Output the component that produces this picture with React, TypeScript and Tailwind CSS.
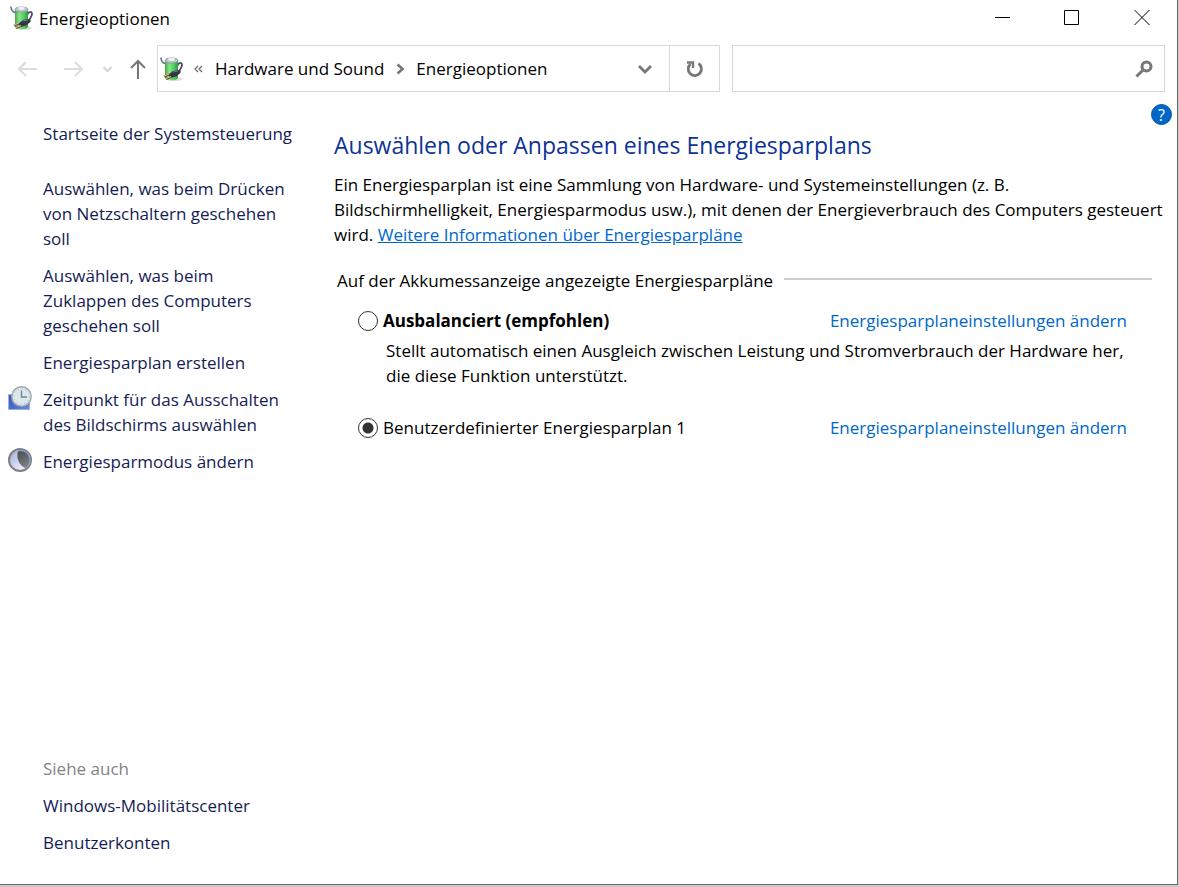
import React, { useState } from 'react';

interface Plan {
  id: string;
  name: string;
  description?: string;
  recommended?: boolean;
}

interface Task {
  label: string;
  icon?: React.ReactNode;
}

const BatteryIcon: React.FC = () => (
  <svg width="24" height="26" viewBox="0 0 24 26" fill="none" aria-hidden="true" className="shrink-0">
    <defs>
      <linearGradient id="battery" x1="4" x2="19" y1="0" y2="0" gradientUnits="userSpaceOnUse">
        <stop stopColor="#2f9a3b" />
        <stop offset=".35" stopColor="#8ce58b" />
        <stop offset=".65" stopColor="#4fd060" />
        <stop offset="1" stopColor="#2c8a3a" />
      </linearGradient>
    </defs>
    <ellipse cx="14" cy="23" rx="8" ry="2" fill="#bbb" opacity=".5" />
    <path d="M1 2c0 4 2 5 5 6" stroke="#6d7384" strokeWidth="1.600" strokeLinecap="round" />
    <path d="M17 10c2-4 5-4 5-1s-3 4-3 8" stroke="#4b5064" strokeWidth="1.800" strokeLinecap="round" />
    <path d="M5 4v18c2 3 11 3 13 0V4z" fill="url(#battery)" />
    <ellipse cx="11.5" cy="4.5" rx="6.5" ry="2.7" fill="#b9c3c4" stroke="#7c8a8b" strokeWidth=".6" />
    <ellipse cx="11.5" cy="3.2" rx="3.4" ry="1.8" fill="#e9f1f3" />
    <path d="m8 19 5-4 6-1 2 2-4 4-6 2z" fill="#343545" />
    <path d="m13 16 5-1" stroke="#777b88" />
    <path d="m4 20.500 5-2m-3 4.500 5-2" stroke="#725035" strokeWidth="2" />
    <path d="m4 20 5-2m-3 4.500 5-2" stroke="#e8c699" />
  </svg>
);

const ClockIcon: React.FC = () => (
  <svg width="24" height="25" viewBox="0 0 24 25" fill="none" aria-hidden="true">
    <defs>
      <linearGradient id="screen" x1="0" x2="20" y1="8" y2="24" gradientUnits="userSpaceOnUse">
        <stop stopColor="#3156bd" />
        <stop offset="1" stopColor="#6387e2" />
      </linearGradient>
    </defs>
    <path d="M.5 8.500h21v15H.5z" fill="url(#screen)" stroke="#a3afd2" />
    <circle cx="13.500" cy="10.500" r="9.700" fill="#dce8ec" stroke="#a3abae" strokeWidth="1.500" />
    <circle cx="13.500" cy="10.500" r="7.500" stroke="#9db3ba" strokeDasharray="1 2.930" />
    <path d="M13.500 4.500v6.500H19" stroke="#6f8994" strokeWidth="1.400" />
  </svg>
);

const MoonIcon: React.FC = () => (
  <svg width="24" height="25" viewBox="0 0 24 25" fill="none" aria-hidden="true">
    <defs>
      <linearGradient id="moon" x1="3" x2="17" y1="4" y2="20" gradientUnits="userSpaceOnUse">
        <stop stopColor="#a9b2da" />
        <stop offset="1" stopColor="#eef0ff" />
      </linearGradient>
      <linearGradient id="shade" x1="10" x2="21" y1="4" y2="20" gradientUnits="userSpaceOnUse">
        <stop stopColor="#4d4d4f" />
        <stop offset="1" stopColor="#898989" />
      </linearGradient>
    </defs>
    <circle cx="12" cy="12" r="11" fill="url(#moon)" stroke="#808080" strokeWidth="2" />
    <path d="M10 3c7-2 12 3 12 9 0 4-2 7-5 8C11 17 8 10 10 3z" fill="url(#shade)" />
    <path d="M10 3c8-2 12 4 12 9 0 4-2 7-5 8" stroke="#7fa3d6" strokeWidth="1.200" />
  </svg>
);

const tasks: Task[] = [
  { label: 'Auswählen, was beim Drücken von Netzschaltern geschehen soll' },
  { label: 'Auswählen, was beim Zuklappen des Computers geschehen soll' },
  { label: 'Energiesparplan erstellen' },
  { label: 'Zeitpunkt für das Ausschalten des Bildschirms auswählen', icon: <ClockIcon /> },
  { label: 'Energiesparmodus ändern', icon: <MoonIcon /> },
];

const plans: Plan[] = [
  {
    id: 'balanced',
    name: 'Ausbalanciert (empfohlen)',
    description:
      'Stellt automatisch einen Ausgleich zwischen Leistung und Stromverbrauch der Hardware her, die diese Funktion unterstützt.',
    recommended: true,
  },
  { id: 'custom', name: 'Benutzerdefinierter Energiesparplan 1' },
];

const TitleBar: React.FC = () => (
  <header className="flex h-9 items-center pl-[10px]">
    <BatteryIcon />
    <h1 className="ml-[5px] grow">Energieoptionen</h1>
    <button aria-label="Minimieren" className="flex h-9 w-[70px] items-center justify-center">
      <svg width="15" height="15" stroke="black" aria-hidden="true"><path d="M0 6.500h15" /></svg>
    </button>
    <button aria-label="Maximieren" className="flex h-9 w-[70px] items-center justify-center">
      <svg width="16" height="16" fill="none" stroke="black" aria-hidden="true"><path d="M.5.5h14v14H.5z" /></svg>
    </button>
    <button aria-label="Schließen" className="flex h-9 w-[70px] items-center justify-center">
      <svg width="16" height="16" stroke="black" aria-hidden="true"><path d="m.5 0 15 15M15.500 0l-15 15" /></svg>
    </button>
  </header>
);

const AddressBar: React.FC = () => (
  <div className="mt-[9px] flex h-[47px] items-center pr-3">
    <nav aria-label="Navigation" className="flex w-[157px] shrink-0 items-center pl-[18px]">
      <button aria-label="Zurück">
        <svg width="20" height="18" fill="none" stroke="#dcdcdc" strokeWidth="2" aria-hidden="true"><path d="M19 9H1m7-7L1 9l7 7" /></svg>
      </button>
      <button aria-label="Vorwärts" className="ml-[26px]">
        <svg width="20" height="18" fill="none" stroke="#dcdcdc" strokeWidth="2" aria-hidden="true"><path d="M0 9h18m-7-7 7 7-7 7" /></svg>
      </button>
      <button aria-label="Zuletzt besucht" className="ml-[18px]">
        <svg width="11" height="8" fill="none" stroke="#d5d5d5" strokeWidth="2" aria-hidden="true"><path d="m1.500 2 4 4 4-4" /></svg>
      </button>
      <button aria-label="Nach oben" className="ml-[17px]">
        <svg width="16" height="20" fill="none" stroke="#777" strokeWidth="2" aria-hidden="true"><path d="M8 20V2M1 9l7-7 7 7" /></svg>
      </button>
    </nav>
    <div className="flex h-full w-[563px] shrink-0 items-center border border-[#d9d9d9] pl-[2px]">
      <BatteryIcon />
      <svg width="9" height="8" fill="none" stroke="#666" strokeWidth="1.200" className="ml-[10px]" aria-hidden="true"><path d="M4 1 1 4l3 3M8 1 5 4l3 3" /></svg>
      <a href="#hardware" className="ml-3">Hardware und Sound</a>
      <svg width="8" height="12" fill="none" stroke="#777" strokeWidth="2.600" className="ml-3" aria-hidden="true"><path d="m1.500 1.500 5 4.500-5 4.500" /></svg>
      <a href="#energie" className="ml-3 grow">Energieoptionen</a>
      <button aria-label="Vorherige Orte" className="flex h-full w-12 items-center justify-center">
        <svg width="14" height="10" fill="none" stroke="#777" strokeWidth="2.800" aria-hidden="true"><path d="m1 2 6 6 6-6" /></svg>
      </button>
      <button aria-label="Aktualisieren" className="flex h-full w-[50px] items-center justify-center border-l border-[#d9d9d9]">
        <svg width="18" height="18" fill="none" stroke="#777" strokeWidth="2.800" aria-hidden="true"><path d="M12.500 3.500A6.600 6.600 0 1 1 4.500 4" /><path d="M1 2.500h6v5.500" strokeWidth="2.400" /></svg>
      </button>
    </div>
    <div className="ml-3 flex h-full grow items-center border border-[#d9d9d9] pr-[11px]">
      <input type="text" aria-label="Systemsteuerung durchsuchen" className="h-full min-w-0 grow px-3 outline-none" />
      <button aria-label="Suchen">
        <svg width="18" height="18" fill="none" stroke="#777" aria-hidden="true"><circle cx="11.500" cy="6.500" r="4.500" strokeWidth="3" /><path d="m8 10-6.500 6.500" strokeWidth="3" /></svg>
      </button>
    </div>
  </div>
);

const Sidebar: React.FC = () => (
  <aside className="flex w-[334px] shrink-0 flex-col pt-[29px] pr-[46px] pb-[29px] pl-[43px] text-[#151c55]">
    <a href="#start" className="whitespace-nowrap">Startseite der Systemsteuerung</a>
    <ul className="mt-[30px] flex flex-col gap-3">
      {tasks.map(task => (
        <li key={task.label} className="relative">
          {task.icon && <span className="absolute -left-[35px] -top-px">{task.icon}</span>}
          <a href="#aufgabe" className="block">{task.label}</a>
        </li>
      ))}
    </ul>
    <div className="mt-auto flex flex-col gap-3">
      <h2 className="text-[#838383]">Siehe auch</h2>
      <a href="#mobil">Windows-Mobilitätscenter</a>
      <a href="#konten">Benutzerkonten</a>
    </div>
  </aside>
);

const App: React.FC = () => {
  const [activePlan, setActivePlan] = useState('custom');

  return (
    <div className="min-h-screen bg-[#c9c9c9] pr-px pb-[2px] font-['Open_Sans','Noto_Sans',sans-serif] text-[17px] leading-[25px] text-black">
      <div className="flex min-h-[calc(100vh-2px)] flex-col border-r border-b border-[#6b6b6b] bg-white">
        <TitleBar />
        <AddressBar />
        <div className="relative flex grow">
          <button aria-label="Hilfe" className="absolute top-3 right-[5px] flex size-[21px] items-center justify-center rounded-full border border-[#07559e] bg-[#0067c8] text-base leading-5 text-white">
            ?
          </button>
          <Sidebar />
          <main className="min-w-0 grow pt-[37px] pr-3">
            <h2 className="text-[23px] leading-8 text-[#0d3396]">Auswählen oder Anpassen eines Energiesparplans</h2>
            <p className="mt-[11px]">
              Ein Energiesparplan ist eine Sammlung von Hardware- und Systemeinstellungen (z.&nbsp;B. Bildschirmhelligkeit,
              Energiesparmodus usw.), mit denen der Energieverbrauch des Computers gesteuert wird.{' '}
              <a href="#info" className="text-[#0067c8] underline">Weitere Informationen über Energiesparpläne</a>
            </p>
            <fieldset className="mt-[21px] pr-[13px]">
              <legend className="flex w-full items-center pl-[3px]">
                Auf der Akkumessanzeige angezeigte Energiesparpläne
                <span className="mb-1 ml-[11px] h-[2px] grow bg-[#cdcdcd]" />
              </legend>
              <div className="mt-[15px] flex flex-col gap-[27px] pr-[25px] pl-6">
                {plans.map(plan => (
                  <div key={plan.id}>
                    <div className="flex items-center">
                      <input
                        id={plan.id}
                        type="radio"
                        name="plan"
                        checked={activePlan === plan.id}
                        onChange={() => setActivePlan(plan.id)}
                        className="mt-px size-5 shrink-0 appearance-none rounded-full border border-[#333] bg-white checked:bg-[radial-gradient(circle,#333_5px,white_6px)]"
                      />
                      <label htmlFor={plan.id} className={`ml-[5px] grow ${plan.recommended ? 'font-bold' : ''}`}>
                        {plan.name}
                      </label>
                      <a href="#einstellungen" className="text-[#0067c8]">Energiesparplaneinstellungen ändern</a>
                    </div>
                    {plan.description && <p className="mt-[5px] pl-7">{plan.description}</p>}
                  </div>
                ))}
              </div>
            </fieldset>
          </main>
        </div>
      </div>
    </div>
  );
};

export default App;
